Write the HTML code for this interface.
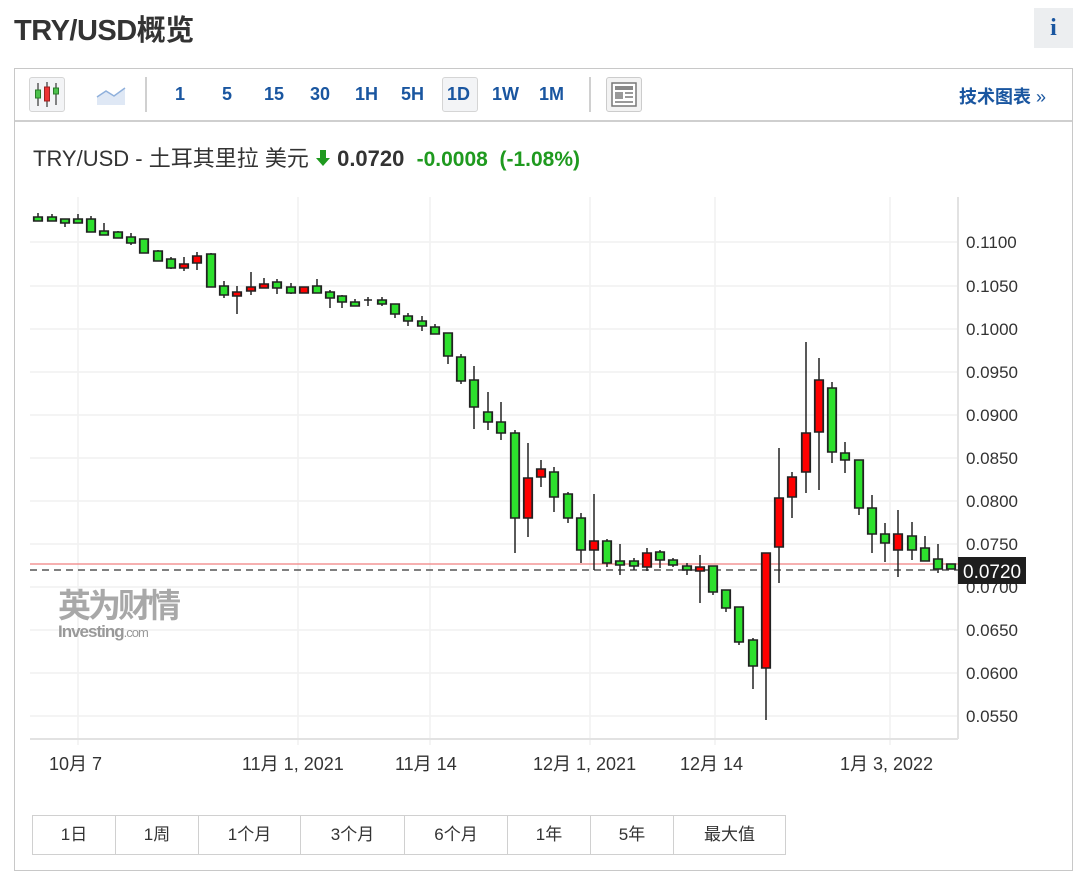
<!DOCTYPE html>
<html><head><meta charset="utf-8">
<style>
*{margin:0;padding:0;box-sizing:border-box}
body{width:1080px;height:884px;background:#fff;font-family:"Liberation Sans","Noto Sans CJK SC",sans-serif;position:relative;overflow:hidden;color:#333}
.abs{position:absolute}
h1{position:absolute;left:14px;top:7px;font-size:29px;font-weight:bold;color:#333;letter-spacing:-0.5px}
.info{left:1034px;top:8px;width:39px;height:40px;background:#eceef0;color:#1a56a0;font:bold 24px "Liberation Serif",serif;text-align:center;line-height:40px}
.box{left:14px;top:68px;width:1059px;height:803px;border:1px solid #c8c8c8}
.tb{left:15px;top:69px;width:1057px;height:53px;border-bottom:2px solid #cfcfcf}
.n{position:absolute;top:84px;font-size:18px;font-weight:bold;color:#1a56a0}
.sel{left:442px;top:77px;width:36px;height:35px;border:1px solid #d5d5d5;border-radius:3px;background:#f3f4f6}
.sep{top:77px;width:2px;height:35px;background:#d0d0d0}
.rng{left:32px;top:815px;height:40px;border:1px solid #d0d0d0;display:flex}
.rng div{border-right:1px solid #d0d0d0;text-align:center;line-height:38px;font-size:17px;color:#333}
.rng div:last-child{border-right:none}
#c rect{transform-box:fill-box;transform-origin:center;transform:scaleX(1.2)}
</style></head><body>
<h1>TRY/USD概览</h1>
<div class="abs info">i</div>
<div class="abs box"></div>
<div class="abs tb"></div>
<div class="abs" style="left:29px;top:77px;width:36px;height:35px;border:1px solid #d5d5d5;border-radius:3px;background:#f3f4f6"></div>
<svg class="abs" style="left:29px;top:77px" width="36" height="35">
<line x1="9" y1="6" x2="9" y2="29" stroke="#444" stroke-width="1.3"/><rect x="6.5" y="13" width="5" height="8" fill="#4cc14c" stroke="#2a7a2a"/>
<line x1="18" y1="5" x2="18" y2="30" stroke="#444" stroke-width="1.3"/><rect x="15.5" y="10" width="5" height="14" fill="#e33" stroke="#922"/>
<line x1="27" y1="6" x2="27" y2="28" stroke="#444" stroke-width="1.3"/><rect x="24.5" y="11" width="5" height="6" fill="#4cc14c" stroke="#2a7a2a"/>
</svg>
<svg class="abs" style="left:96px;top:84px" width="30" height="22"><path d="M1 13 L10 7 L18 12 L29 4 L29 21 L1 21Z" fill="#dfe8f5"/><path d="M1 13 L10 7 L18 12 L29 4" fill="none" stroke="#8fb0dc" stroke-width="1.5"/></svg>
<div class="abs sep" style="left:145px"></div>
<div class="abs sel"></div>
<span class="n" style="left:175px">1</span>
<span class="n" style="left:222px">5</span>
<span class="n" style="left:264px">15</span>
<span class="n" style="left:310px">30</span>
<span class="n" style="left:355px">1H</span>
<span class="n" style="left:401px">5H</span>
<span class="n" style="left:447px">1D</span>
<span class="n" style="left:492px">1W</span>
<span class="n" style="left:539px">1M</span>
<div class="abs sep" style="left:589px"></div>
<div class="abs" style="left:606px;top:77px;width:36px;height:35px;border:1px solid #ccc;border-radius:3px;background:#f3f3f3"></div>
<svg class="abs" style="left:611px;top:82px" width="26" height="25"><rect x="1" y="1" width="24" height="23" fill="#fff" stroke="#777" stroke-width="1.5"/><rect x="4" y="4" width="18" height="4" fill="#888"/><rect x="4" y="10" width="8" height="7" fill="#999"/><rect x="14" y="10" width="8" height="2" fill="#999"/><rect x="14" y="14" width="8" height="2" fill="#999"/><rect x="4" y="19" width="18" height="2" fill="#999"/></svg>
<div class="abs" style="left:959px;top:83px;font-size:18px;font-weight:bold;color:#1a56a0">技术图表 <span style="font-weight:normal">»</span></div>
<div class="abs" style="left:33px;top:141px;font-size:22px;color:#333;white-space:nowrap">TRY/USD - 土耳其里拉 美元 <svg width="16" height="18" style="vertical-align:-1px"><path d="M5 1h6v8h4l-7 8-7-8h4z" fill="#1f9a1f"/></svg> <b>0.0720</b> &nbsp;<span style="color:#1f9a1f;font-weight:bold;font-size:21px">-0.0008 &nbsp;(-1.08%)</span></div>

<svg class="abs" style="left:0;top:0" width="1080" height="884">
<g stroke="#f1f1f1" stroke-width="1.5">
<line x1="30" x2="958" y1="242" y2="242"/><line x1="30" x2="958" y1="286" y2="286"/><line x1="30" x2="958" y1="329" y2="329"/><line x1="30" x2="958" y1="372" y2="372"/><line x1="30" x2="958" y1="415" y2="415"/><line x1="30" x2="958" y1="458" y2="458"/><line x1="30" x2="958" y1="501" y2="501"/><line x1="30" x2="958" y1="544" y2="544"/><line x1="30" x2="958" y1="587" y2="587"/><line x1="30" x2="958" y1="630" y2="630"/><line x1="30" x2="958" y1="673" y2="673"/><line x1="30" x2="958" y1="716" y2="716"/>
<line x1="78" x2="78" y1="197" y2="745"/><line x1="298" x2="298" y1="197" y2="745"/><line x1="430" x2="430" y1="197" y2="745"/><line x1="590" x2="590" y1="197" y2="745"/><line x1="715" x2="715" y1="197" y2="745"/><line x1="890" x2="890" y1="197" y2="745"/>
</g>
<line x1="30" x2="958" y1="739" y2="739" stroke="#e2e2e2" stroke-width="2"/>
<line x1="958" x2="958" y1="197" y2="739" stroke="#e2e2e2" stroke-width="2"/>
<g fill="#333" font-size="17" font-family="Liberation Sans,sans-serif">
<text x="966" y="248">0.1100</text><text x="966" y="292">0.1050</text><text x="966" y="335">0.1000</text><text x="966" y="378">0.0950</text><text x="966" y="421">0.0900</text><text x="966" y="464">0.0850</text><text x="966" y="507">0.0800</text><text x="966" y="550">0.0750</text><text x="966" y="593">0.0700</text><text x="966" y="636">0.0650</text><text x="966" y="679">0.0600</text><text x="966" y="722">0.0550</text>
</g>
<g fill="#333" font-size="18" font-family="Liberation Sans,Noto Sans CJK SC,sans-serif">
<text x="49" y="770">10月 7</text><text x="242" y="770">11月 1, 2021</text><text x="395" y="770">11月 14</text><text x="533" y="770">12月 1, 2021</text><text x="680" y="770">12月 14</text><text x="840" y="770">1月 3, 2022</text>
</g>
<text x="58" y="617" font-family="Noto Sans CJK SC,sans-serif" font-weight="bold" font-size="33" fill="#a8a8a8" letter-spacing="-3">英为财情</text>
<text x="58" y="637" font-family="Liberation Sans,sans-serif" font-size="17" font-weight="bold" fill="#999" letter-spacing="-1">Investing<tspan font-size="13" font-weight="normal">.com</tspan></text>
<line x1="30" x2="958" y1="564" y2="564" stroke="#f08080" stroke-width="1.2"/>
<line x1="30" x2="958" y1="570" y2="570" stroke="#555" stroke-width="1.5" stroke-dasharray="7,5"/>
<g stroke="#222" stroke-width="1.5" id="c">
<line x1="38" x2="38" y1="213" y2="221"/><rect x="34.5" y="217" width="7" height="4" fill="#2de02d"/>
<line x1="52" x2="52" y1="214" y2="221"/><rect x="48.5" y="217" width="7" height="4" fill="#2de02d"/>
<line x1="65" x2="65" y1="219" y2="227"/><rect x="61.5" y="219" width="7" height="4" fill="#2de02d"/>
<line x1="78" x2="78" y1="214" y2="223"/><rect x="74.5" y="219" width="7" height="4" fill="#2de02d"/>
<line x1="91" x2="91" y1="216" y2="232"/><rect x="87.5" y="219" width="7" height="13" fill="#2de02d"/>
<line x1="104" x2="104" y1="223" y2="235"/><rect x="100.5" y="231" width="7" height="4" fill="#2de02d"/>
<line x1="118" x2="118" y1="231" y2="238"/><rect x="114.5" y="232" width="7" height="6" fill="#2de02d"/>
<line x1="131" x2="131" y1="233" y2="245"/><rect x="127.5" y="237" width="7" height="6" fill="#2de02d"/>
<line x1="144" x2="144" y1="239" y2="253"/><rect x="140.5" y="239" width="7" height="14" fill="#2de02d"/>
<line x1="158" x2="158" y1="250" y2="261"/><rect x="154.5" y="251" width="7" height="10" fill="#2de02d"/>
<line x1="171" x2="171" y1="257" y2="269"/><rect x="167.5" y="259" width="7" height="9" fill="#2de02d"/>
<line x1="184" x2="184" y1="257" y2="271"/><rect x="180.5" y="264" width="7" height="4" fill="#f00"/>
<line x1="197" x2="197" y1="252" y2="270"/><rect x="193.5" y="256" width="7" height="7" fill="#f00"/>
<line x1="211" x2="211" y1="253" y2="287"/><rect x="207.5" y="254" width="7" height="33" fill="#2de02d"/>
<line x1="224" x2="224" y1="281" y2="298"/><rect x="220.5" y="286" width="7" height="9" fill="#2de02d"/>
<line x1="237" x2="237" y1="286" y2="314"/><rect x="233.5" y="292" width="7" height="4" fill="#f00"/>
<line x1="251" x2="251" y1="272" y2="295"/><rect x="247.5" y="287" width="7" height="4" fill="#f00"/>
<line x1="264" x2="264" y1="278" y2="288"/><rect x="260.5" y="284" width="7" height="4" fill="#f00"/>
<line x1="277" x2="277" y1="279" y2="294"/><rect x="273.5" y="282" width="7" height="6" fill="#2de02d"/>
<line x1="291" x2="291" y1="283" y2="294"/><rect x="287.5" y="287" width="7" height="6" fill="#2de02d"/>
<line x1="304" x2="304" y1="287" y2="293"/><rect x="300.5" y="287" width="7" height="6" fill="#f00"/>
<line x1="317" x2="317" y1="279" y2="293"/><rect x="313.5" y="286" width="7" height="7" fill="#2de02d"/>
<line x1="330" x2="330" y1="290" y2="308"/><rect x="326.5" y="292" width="7" height="6" fill="#2de02d"/>
<line x1="342" x2="342" y1="295" y2="308"/><rect x="338.5" y="296" width="7" height="6" fill="#2de02d"/>
<line x1="355" x2="355" y1="299" y2="306"/><rect x="351.5" y="302" width="7" height="4" fill="#2de02d"/>
<line x1="368" x2="368" y1="297" y2="306"/><line x1="364" x2="372" y1="300" y2="300"/>
<line x1="382" x2="382" y1="297" y2="306"/><rect x="378.5" y="300" width="7" height="4" fill="#2de02d"/>
<line x1="395" x2="395" y1="304" y2="318"/><rect x="391.5" y="304" width="7" height="10" fill="#2de02d"/>
<line x1="408" x2="408" y1="313" y2="326"/><rect x="404.5" y="316" width="7" height="5" fill="#2de02d"/>
<line x1="422" x2="422" y1="316" y2="331"/><rect x="418.5" y="321" width="7" height="5" fill="#2de02d"/>
<line x1="435" x2="435" y1="324" y2="334"/><rect x="431.5" y="327" width="7" height="7" fill="#2de02d"/>
<line x1="448" x2="448" y1="333" y2="364"/><rect x="444.5" y="333" width="7" height="23" fill="#2de02d"/>
<line x1="461" x2="461" y1="354" y2="384"/><rect x="457.5" y="357" width="7" height="24" fill="#2de02d"/>
<line x1="474" x2="474" y1="366" y2="429"/><rect x="470.5" y="380" width="7" height="27" fill="#2de02d"/>
<line x1="488" x2="488" y1="392" y2="430"/><rect x="484.5" y="412" width="7" height="10" fill="#2de02d"/>
<line x1="501" x2="501" y1="402" y2="440"/><rect x="497.5" y="422" width="7" height="11" fill="#2de02d"/>
<line x1="515" x2="515" y1="430" y2="553"/><rect x="511.5" y="433" width="7" height="85" fill="#2de02d"/>
<line x1="528" x2="528" y1="443" y2="537"/><rect x="524.5" y="478" width="7" height="40" fill="#f00"/>
<line x1="541" x2="541" y1="460" y2="487"/><rect x="537.5" y="469" width="7" height="8" fill="#f00"/>
<line x1="554" x2="554" y1="467" y2="512"/><rect x="550.5" y="472" width="7" height="25" fill="#2de02d"/>
<line x1="568" x2="568" y1="492" y2="523"/><rect x="564.5" y="494" width="7" height="24" fill="#2de02d"/>
<line x1="581" x2="581" y1="513" y2="563"/><rect x="577.5" y="518" width="7" height="32" fill="#2de02d"/>
<line x1="594" x2="594" y1="494" y2="570"/><rect x="590.5" y="541" width="7" height="9" fill="#f00"/>
<line x1="607" x2="607" y1="539" y2="567"/><rect x="603.5" y="541" width="7" height="22" fill="#2de02d"/>
<line x1="620" x2="620" y1="544" y2="575"/><rect x="616.5" y="561" width="7" height="4" fill="#2de02d"/>
<line x1="634" x2="634" y1="558" y2="570"/><rect x="630.5" y="561" width="7" height="5" fill="#2de02d"/>
<line x1="647" x2="647" y1="548" y2="571"/><rect x="643.5" y="553" width="7" height="14" fill="#f00"/>
<line x1="660" x2="660" y1="550" y2="568"/><rect x="656.5" y="552" width="7" height="8" fill="#2de02d"/>
<line x1="673" x2="673" y1="558" y2="567"/><rect x="669.5" y="560" width="7" height="5" fill="#2de02d"/>
<line x1="687" x2="687" y1="563" y2="575"/><rect x="683.5" y="566" width="7" height="4" fill="#2de02d"/>
<line x1="700" x2="700" y1="555" y2="603"/><rect x="696.5" y="567" width="7" height="4" fill="#f00"/>
<line x1="713" x2="713" y1="566" y2="595"/><rect x="709.5" y="566" width="7" height="26" fill="#2de02d"/>
<line x1="726" x2="726" y1="590" y2="612"/><rect x="722.5" y="590" width="7" height="18" fill="#2de02d"/>
<line x1="739" x2="739" y1="607" y2="645"/><rect x="735.5" y="607" width="7" height="35" fill="#2de02d"/>
<line x1="753" x2="753" y1="638" y2="689"/><rect x="749.5" y="640" width="7" height="26" fill="#2de02d"/>
<line x1="766" x2="766" y1="553" y2="720"/><rect x="762.5" y="553" width="7" height="115" fill="#f00"/>
<line x1="779" x2="779" y1="448" y2="583"/><rect x="775.5" y="498" width="7" height="49" fill="#f00"/>
<line x1="792" x2="792" y1="472" y2="518"/><rect x="788.5" y="477" width="7" height="20" fill="#f00"/>
<line x1="806" x2="806" y1="342" y2="493"/><rect x="802.5" y="433" width="7" height="39" fill="#f00"/>
<line x1="819" x2="819" y1="358" y2="490"/><rect x="815.5" y="380" width="7" height="52" fill="#f00"/>
<line x1="832" x2="832" y1="382" y2="463"/><rect x="828.5" y="388" width="7" height="64" fill="#2de02d"/>
<line x1="845" x2="845" y1="442" y2="473"/><rect x="841.5" y="453" width="7" height="7" fill="#2de02d"/>
<line x1="859" x2="859" y1="460" y2="515"/><rect x="855.5" y="460" width="7" height="48" fill="#2de02d"/>
<line x1="872" x2="872" y1="495" y2="553"/><rect x="868.5" y="508" width="7" height="26" fill="#2de02d"/>
<line x1="885" x2="885" y1="523" y2="562"/><rect x="881.5" y="534" width="7" height="9" fill="#2de02d"/>
<line x1="898" x2="898" y1="510" y2="577"/><rect x="894.5" y="534" width="7" height="16" fill="#f00"/>
<line x1="912" x2="912" y1="522" y2="560"/><rect x="908.5" y="536" width="7" height="14" fill="#2de02d"/>
<line x1="925" x2="925" y1="536" y2="561"/><rect x="921.5" y="548" width="7" height="13" fill="#2de02d"/>
<line x1="938" x2="938" y1="544" y2="573"/><rect x="934.5" y="559" width="7" height="10" fill="#2de02d"/>
<line x1="951" x2="951" y1="564" y2="569"/><rect x="947.5" y="564" width="7" height="5" fill="#2de02d"/>
</g>
<rect x="958" y="557" width="68" height="27" fill="#1e1e1e"/>
<text x="963" y="578" fill="#fff" font-size="19" font-family="Liberation Sans,sans-serif">0.0720</text>
</svg>
<div class="abs rng"><div style="width:83px">1日</div><div style="width:83px">1周</div><div style="width:102px">1个月</div><div style="width:104px">3个月</div><div style="width:103px">6个月</div><div style="width:83px">1年</div><div style="width:83px">5年</div><div style="width:111px">最大值</div></div>
</body></html>
